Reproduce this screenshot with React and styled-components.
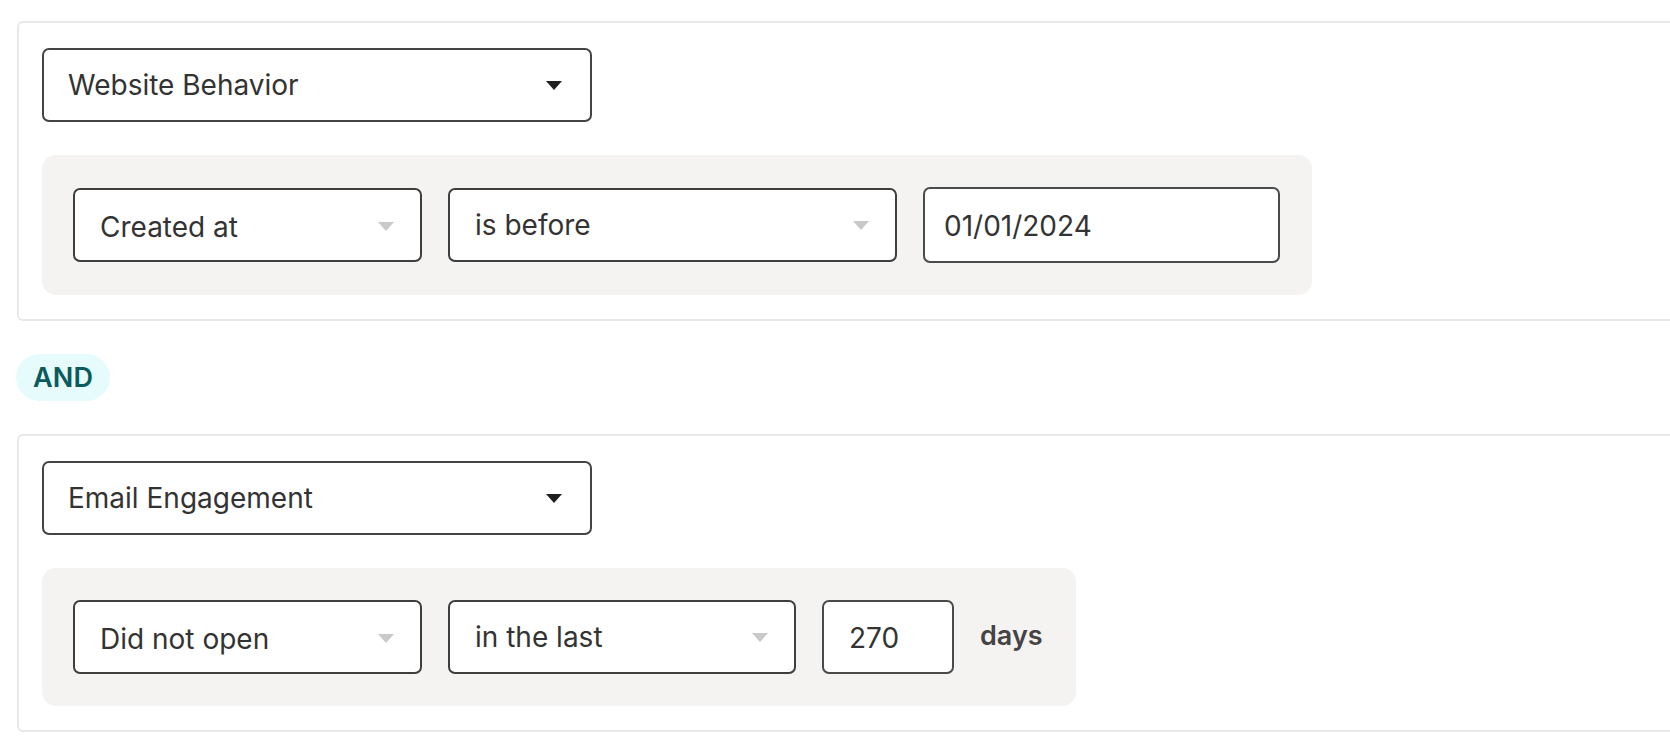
import React from "react";
import styled, { createGlobalStyle } from "styled-components";

const GlobalStyle = createGlobalStyle`
  html, body {
    margin: 0;
    padding: 0;
    background: #ffffff;
    overflow: hidden;
  }
  body {
    font-family: Inter, "Noto Sans", "Liberation Sans", sans-serif;
    color: #333333;
  }
`;

const Page = styled.div`
  width: 1720px;
  padding: 21px 0 0 17px;
  box-sizing: border-box;
  display: flex;
  flex-direction: column;
  align-items: flex-start;
`;

const Card = styled.section`
  align-self: stretch;
  box-sizing: border-box;
  border: 2px solid #e8e8e8;
  border-radius: 6px;
  padding: 25px 24px 24px 23px;
  display: flex;
  flex-direction: column;
  align-items: flex-start;
  gap: 33px;
`;

const GroupSelect = styled.div`
  box-sizing: border-box;
  width: 550px;
  height: 74px;
  border: 2px solid #444444;
  border-radius: 7px;
  background: #ffffff;
  display: flex;
  align-items: center;
  justify-content: space-between;
  padding: 0 28px 0 24px;
  font-size: 28px;
  line-height: 1;
  color: #333333;
`;

const ConditionPanel = styled.div`
  box-sizing: border-box;
  background: #f4f3f1;
  border-radius: 14px;
  padding: 32px ${(p) => p.$padRight}px 32px 31px;
  display: flex;
  align-items: center;
  gap: 26px;
`;

const FieldSelect = styled.div`
  box-sizing: border-box;
  width: ${(p) => p.$w}px;
  height: 74px;
  border: 2px solid #3e3e3e;
  border-radius: 7px;
  background: #ffffff;
  display: flex;
  align-items: center;
  justify-content: space-between;
  padding: ${(p) => (p.$low ? "3px" : "0")} 26px 0 25px;
  font-size: 28px;
  line-height: 1;
  color: #333333;
`;

const TextInput = styled.div`
  box-sizing: border-box;
  width: ${(p) => p.$w}px;
  height: ${(p) => p.$h || 74}px;
  border: 2px solid #4a4a4a;
  border-radius: 7px;
  background: #ffffff;
  display: flex;
  align-items: center;
  padding: 2px ${(p) => p.$pad}px 0;
  font-size: 28px;
  line-height: 1;
  color: #333333;
`;

const Unit = styled.span`
  font-size: 27px;
  font-weight: 600;
  color: #444444;
  margin-bottom: 4px;
`;

const AndBadge = styled.div`
  margin: 33px 0 33px -1px;
  height: 47px;
  box-sizing: border-box;
  padding: 0 17px;
  border-radius: 24px;
  background: #e6fbfb;
  color: #0b5a5c;
  font-size: 27px;
  font-weight: 600;
  display: flex;
  align-items: center;
  letter-spacing: 0.2px;
`;

const CaretSvg = styled.svg`
  flex: none;
  display: block;
`;

const Caret = ({ color }) => (
  <CaretSvg width="16" height="9" viewBox="0 0 16 9">
    <path d="M0 0 H16 L8 9 Z" fill={color} />
  </CaretSvg>
);

const Group = ({ title, padRight, children }) => (
  <Card>
    <GroupSelect>
      <span>{title}</span>
      <Caret color="#1f1f1f" />
    </GroupSelect>
    <ConditionPanel $padRight={padRight}>{children}</ConditionPanel>
  </Card>
);

const Field = ({ w, low, children }) => (
  <FieldSelect $w={w} $low={low}>
    <span>{children}</span>
    <Caret color="#c9c9c9" />
  </FieldSelect>
);

export default function App() {
  return (
    <>
      <GlobalStyle />
      <Page>
        <Group title="Website Behavior" padRight={32}>
          <Field w={349} low>
            Created at
          </Field>
          <Field w={449}>is before</Field>
          <TextInput $w={357} $h={76} $pad={19}>
            01/01/2024
          </TextInput>
        </Group>
        <AndBadge>AND</AndBadge>
        <Group title="Email Engagement" padRight={33}>
          <Field w={349} low>
            Did not open
          </Field>
          <Field w={348}>in the last</Field>
          <TextInput $w={132} $pad={25}>
            270
          </TextInput>
          <Unit>days</Unit>
        </Group>
      </Page>
    </>
  );
}
